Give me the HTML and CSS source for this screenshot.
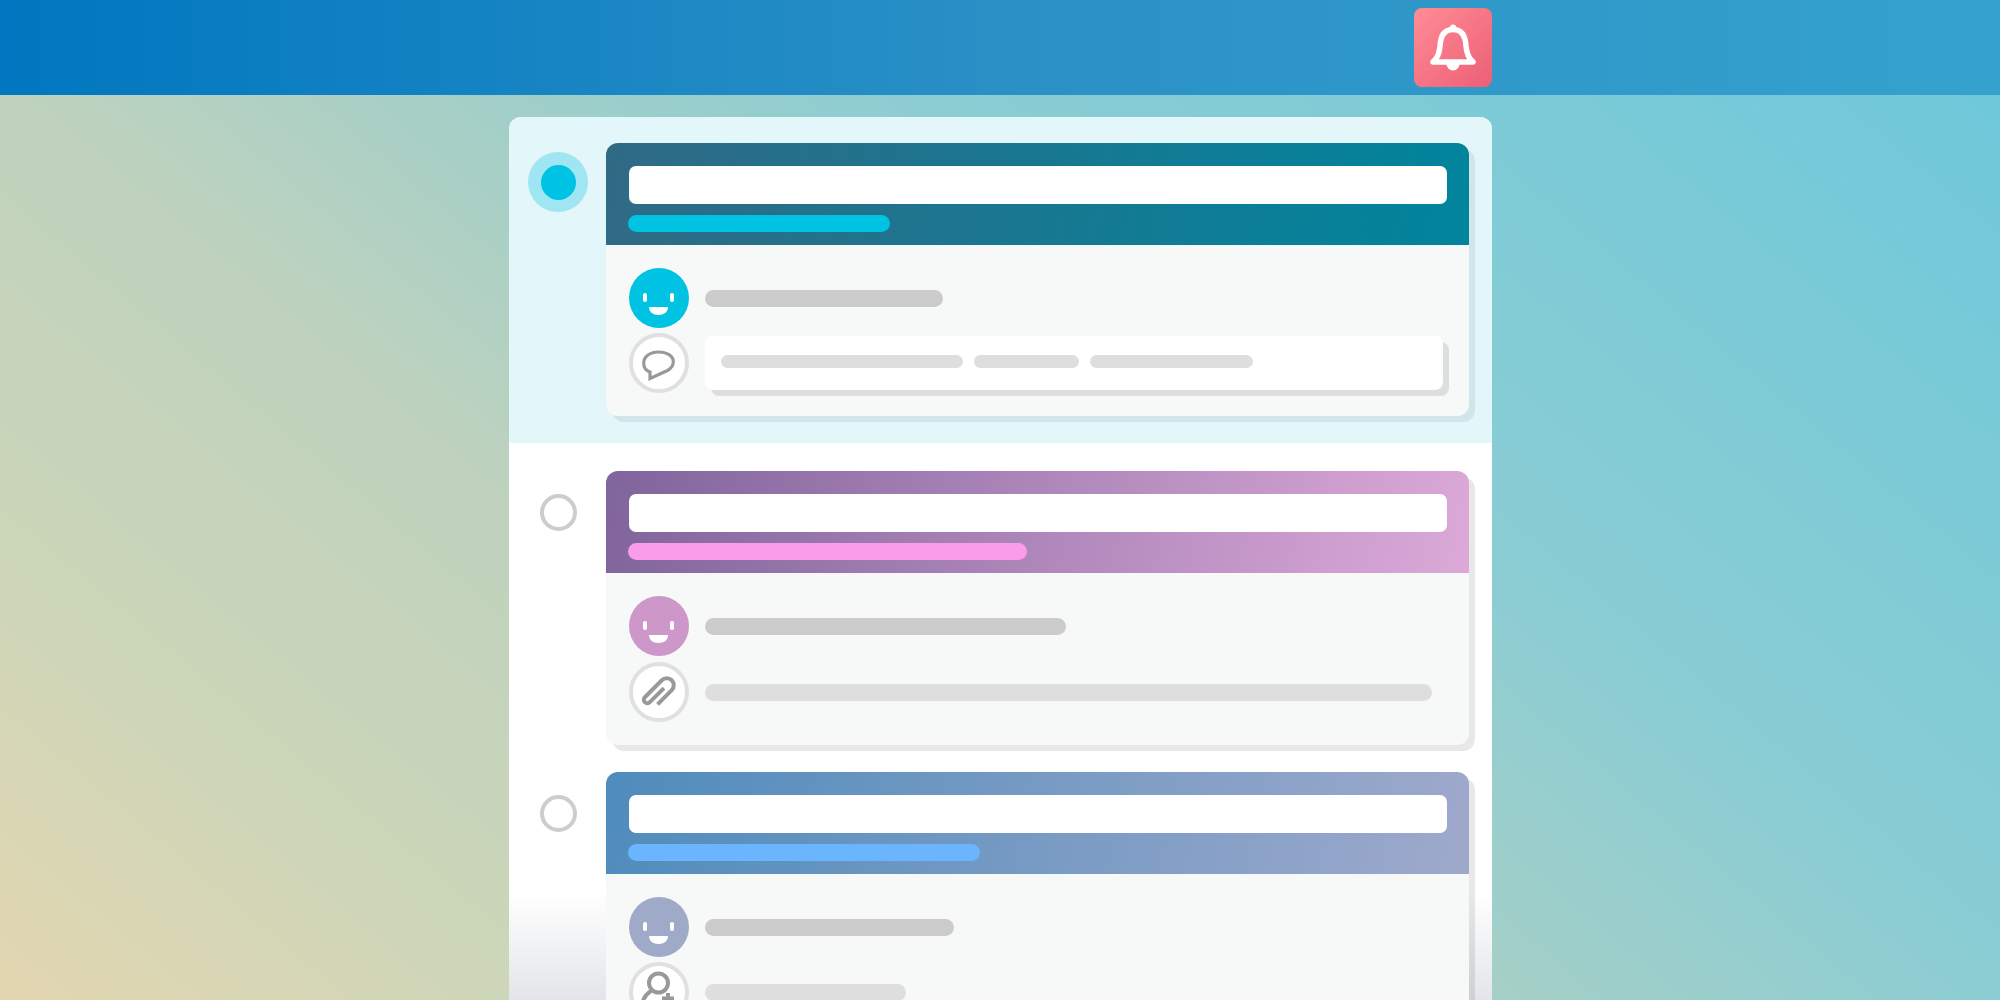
FILE: index.html
```html
<!DOCTYPE html>
<html lang="en">
<head>
    <meta charset="UTF-8">
    <title>Notifications</title>
    <link rel="stylesheet" href="styles.css">
</head>
<body>

    <header class="topbar">
        <div class="topbar-inner">
            <div class="bell">
                <svg viewBox="0.5 0 78 79" width="78" height="79">
                    <circle cx="39.5" cy="19.5" r="3" fill="#fff"></circle>
                    <path class="bell-body" d="M19.5 54C24.5 50 26 44 26.5 38C27 28 30.5 21.5 39.5 21.5C48.5 21.5 52 28 52.5 38C53 44 54.5 50 59.5 54Z"></path>
                    <path d="M33 56A6.5 6.5 0 0 0 46 56Z" fill="#fff"></path>
                </svg>
            </div>
        </div>
    </header>

    <main class="panel">

        <section class="row row-active">
            <div class="radio-slot"><div class="radio-on"><div class="radio-dot"></div></div></div>
            <article class="card">
                <div class="card-head head-teal">
                    <div class="title"></div>
                    <div class="sub sub-teal"></div>
                </div>
                <div class="card-body">
                    <div class="line">
                        <svg class="avatar av-teal" viewBox="0 0 60 60">
                            <rect x="14" y="25" width="4" height="9" rx="2"></rect>
                            <rect x="41" y="25" width="4" height="9" rx="2"></rect>
                            <path d="M20 39H39C39 44 35 47 29.500 47C24 47 20 44 20 39Z"></path>
                        </svg>
                        <div class="bar bar-name name-teal"></div>
                    </div>
                    <div class="line line-second">
                        <div class="icon-ring">
                            <svg viewBox="0 0 52 52" width="52" height="52">
                                <path class="thin" d="M17 41.500V35C12.500 33.500 10.700 30 10.700 26C10.700 19.500 17 15 25.500 15C34 15 40.300 19 40.300 24.500C40.300 28.500 38 31.500 34.500 33.500Z"></path>
                            </svg>
                        </div>
                        <div class="comment">
                            <div class="bar bar-light c1"></div>
                            <div class="bar bar-light c2"></div>
                            <div class="bar bar-light c3"></div>
                        </div>
                    </div>
                </div>
            </article>
        </section>

        <section class="row">
            <div class="radio-slot"><div class="radio-off"></div></div>
            <article class="card card-tall">
                <div class="card-head head-purple">
                    <div class="title"></div>
                    <div class="sub sub-purple"></div>
                </div>
                <div class="card-body">
                    <div class="line">
                        <svg class="avatar av-purple" viewBox="0 0 60 60">
                            <rect x="14" y="25" width="4" height="9" rx="2"></rect>
                            <rect x="41" y="25" width="4" height="9" rx="2"></rect>
                            <path d="M20 39H39C39 44 35 47 29.500 47C24 47 20 44 20 39Z"></path>
                        </svg>
                        <div class="bar bar-name name-purple"></div>
                    </div>
                    <div class="line line-second">
                        <div class="icon-ring">
                            <svg viewBox="0 0 52 52" width="52" height="52">
                                <path transform="translate(26 27) rotate(45)" d="M0 -7V13A3.500 3.500 0 0 1 -7 13V-11A7 7 0 0 1 7 -11V9"></path>
                            </svg>
                        </div>
                        <div class="bar bar-light bar-attach"></div>
                    </div>
                </div>
            </article>
        </section>

        <section class="row">
            <div class="radio-slot"><div class="radio-off"></div></div>
            <article class="card">
                <div class="card-head head-blue">
                    <div class="title"></div>
                    <div class="sub sub-blue"></div>
                </div>
                <div class="card-body">
                    <div class="line">
                        <svg class="avatar av-blue" viewBox="0 0 60 60">
                            <rect x="14" y="25" width="4" height="9" rx="2"></rect>
                            <rect x="41" y="25" width="4" height="9" rx="2"></rect>
                            <path d="M20 39H39C39 44 35 47 29.500 47C24 47 20 44 20 39Z"></path>
                        </svg>
                        <div class="bar bar-name name-blue"></div>
                    </div>
                    <div class="line line-second">
                        <div class="icon-ring">
                            <svg viewBox="0 0 52 52" width="52" height="52">
                                <circle cx="25.500" cy="17" r="9.500"></circle>
                                <path d="M18 25C13 28 10 33 9 39"></path>
                                <path d="M35 27V39M29 32.500H41"></path>
                            </svg>
                        </div>
                        <div class="bar bar-light bar-person"></div>
                    </div>
                </div>
            </article>
        </section>

    </main>

</body>
</html>
```

FILE: styles.css
```css
*{
    margin: 0;
    padding: 0;
    box-sizing: border-box;
}

html, body{
    height: 100vh;
    width: 100%;
    overflow: hidden;
}

body{
    display: flex;
    flex-direction: column;
    font-family: "Liberation Sans", sans-serif;
    background: linear-gradient(40deg, #e3d6b0 0%, #cdd6b8 16%, #bfd2bd 34%, #a2cfc8 49%, #8bcdd3 63%, #6ec8da 97%);
}

/* ---------- top bar ---------- */
.topbar{
    flex: 0 0 95px;
    background: linear-gradient(90deg, #0077c0 0%, #2a90c6 50%, #35a2cd 100%);
}

.topbar-inner{
    width: 983px;
    margin-left: 509px;
    padding-top: 8px;
    display: flex;
    justify-content: flex-end;
}

.bell{
    width: 78px;
    height: 79px;
    border-radius: 8px;
    background: linear-gradient(135deg, #ff8c96, #ec5f76);
}

.bell svg{
    display: block;
}

.bell-body{
    fill: none;
    stroke: #fff;
    stroke-width: 5.5;
    stroke-linejoin: round;
}

/* ---------- panel ---------- */
.panel{
    width: 983px;
    height: 883px;
    margin: 22px 0 0 509px;
    border-radius: 12px 12px 0 0;
    overflow: hidden;
    background: linear-gradient(to top, #e3e5e9 0, #fff 108px);
}

.row{
    display: flex;
    padding: 0 23px 27px 0;
}

.row-active{
    padding-top: 26px;
    margin-bottom: 28px;
    background-color: #e3f6fa;
}

.radio-slot{
    flex: 0 0 97px;
}

.radio-on{
    width: 60px;
    height: 60px;
    margin: 9px 0 0 19px;
    border-radius: 50%;
    background-color: #9fe6f2;
    display: flex;
    justify-content: center;
    align-items: center;
}

.radio-dot{
    width: 35px;
    height: 35px;
    border-radius: 50%;
    background-color: #00c2e3;
}

.radio-off{
    width: 37px;
    height: 37px;
    margin: 23px 0 0 31px;
    border: 4px solid #cdcdcd;
    border-radius: 50%;
    background-color: #fff;
}

/* ---------- cards ---------- */
.card{
    width: 863px;
    flex: none;
    border-radius: 12px;
    background-color: #f7f9f8;
    box-shadow: 6px 6px 0 rgba(0, 0, 0, .09);
}

.row-active .card{
    box-shadow: 6px 6px 0 #d0e6eb;
}

.card-head{
    height: 102px;
    padding: 23px 22px 0 23px;
    border-radius: 12px 12px 0 0;
}

.head-teal{ background: linear-gradient(100deg, #306a85, #00859d); }
.head-purple{ background: linear-gradient(100deg, #80649c, #dca9d8); }
.head-blue{ background: linear-gradient(100deg, #4f8cbc, #9fa9cc); }

.title{
    height: 38px;
    border-radius: 7px;
    background-color: #fff;
}

.sub{
    height: 17px;
    margin: 11px 0 0 -1px;
    border-radius: 9px;
}

.sub-teal{ width: 262px; background-color: #00c2e3; }
.sub-purple{ width: 399px; background-color: #fb9cea; }
.sub-blue{ width: 352px; background-color: #6bb5ff; }

.card-body{
    padding: 23px 23px 23px;
}

.line{
    display: flex;
    align-items: center;
    gap: 16px;
}

.line-second{
    margin-top: 5px;
}

.card-tall .line-second{
    margin-top: 6px;
}

.avatar{
    width: 60px;
    height: 60px;
    flex: none;
    border-radius: 50%;
    fill: #fff;
}

.av-teal{ background-color: #00c2e3; }
.av-purple{ background-color: #cd97c9; }
.av-blue{ background-color: #9faac9; }

.icon-ring{
    width: 60px;
    height: 60px;
    flex: none;
    border: 4px solid #e0e0e0;
    border-radius: 50%;
    background-color: #fff;
    overflow: hidden;
}

.icon-ring svg{
    display: block;
    fill: none;
    stroke: #999;
    stroke-width: 4;
}

.icon-ring .thin{
    stroke-width: 3.2;
}

.bar{
    height: 17px;
    border-radius: 9px;
}

.bar-name{ background-color: #cbcbcb; }
.name-teal{ width: 238px; }
.name-purple{ width: 361px; }
.name-blue{ width: 249px; }

.bar-light{ background-color: #dedede; }
.bar-attach{ width: 727px; }
.bar-person{ width: 201px; }

.comment{
    width: 738px;
    height: 54px;
    padding: 19px 16px 0;
    display: flex;
    gap: 11px;
    border-radius: 8px;
    background-color: #fff;
    box-shadow: 6px 6px 0 rgba(0, 0, 0, .1);
}

.comment .bar{
    height: 13px;
}

.c1{ width: 242px; }
.c2{ width: 105px; }
.c3{ width: 163px; }
```
